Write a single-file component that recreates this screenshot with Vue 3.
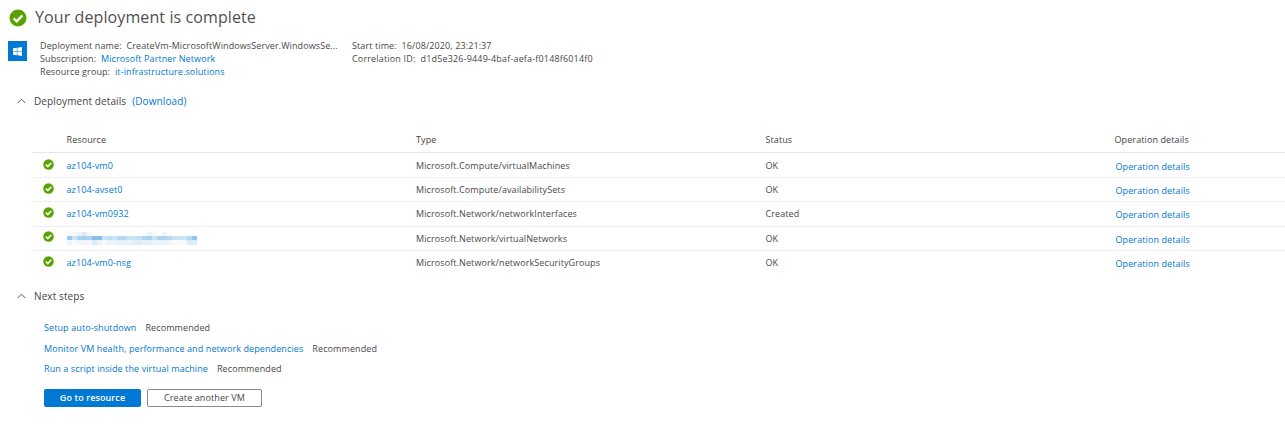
<script setup>
const rows = [
  { name: 'az104-vm0', type: 'Microsoft.Compute/virtualMachines', status: 'OK' },
  { name: 'az104-avset0', type: 'Microsoft.Compute/availabilitySets', status: 'OK' },
  { name: 'az104-vm0932', type: 'Microsoft.Network/networkInterfaces', status: 'Created' },
  { name: '', type: 'Microsoft.Network/virtualNetworks', status: 'OK' },
  { name: 'az104-vm0-nsg', type: 'Microsoft.Network/networkSecurityGroups', status: 'OK' },
]
const steps = [
  'Setup auto-shutdown',
  'Monitor VM health, performance and network dependencies',
  'Run a script inside the virtual machine',
]
const blurRows = [
  [.05,.08,.12,.2,.05,0,0,0,0,0,0,0,0,0,0,0,.12,.05,0,.1,.02,0,0,0,0,0],
  [.55,.3,.45,.5,.45,.65,.65,.3,.35,.3,.4,.4,.3,.3,.35,.45,.45,.3,.45,.45,.4,.3,.3,.3,.4,.6],
  [.1,.03,.08,.08,.08,.2,.12,.03,.1,.12,.15,.15,.12,.18,.18,.15,.15,.1,.12,.12,.1,.05,.05,.05,.2,.2],
]
</script>

<template>
  <main class="page">
    <header class="title">
      <svg class="title-icon" viewBox="0 0 18 18"><circle cx="9" cy="9" r="8.5" fill="#57a300"/><path d="M4.6 9.3 7.7 12.3 13.4 6.3" fill="none" stroke="#fff" stroke-width="2.4"/></svg>
      <h1>Your deployment is complete</h1>
    </header>

    <section class="summary">
      <div class="tile">
        <svg viewBox="0 0 10 10" width="9" height="9"><path d="M0 1.4 4.3.8v3.9H0zM4.9.7 10 0v4.7H4.9zM0 5.3h4.3v3.9L0 8.6zM4.9 5.3H10V10L4.9 9.3z" fill="#fff"/></svg>
      </div>
      <div class="meta first">
        <div>Deployment name:&nbsp; CreateVm-MicrosoftWindowsServer.WindowsSe...</div>
        <div>Subscription:&nbsp; <a>Microsoft Partner Network</a></div>
        <div>Resource group:&nbsp; <a>it-infrastructure.solutions</a></div>
      </div>
      <div class="meta">
        <div>Start time:&nbsp; 16/08/2020, 23:21:37</div>
        <div class="corr">Correlation ID:&nbsp; d1d5e326-9449-4baf-aefa-f0148f6014f0</div>
      </div>
    </section>

    <section class="section-head details-head">
      <svg class="chev" viewBox="0 0 10 6"><path d="M.7 5.3 5 1l4.3 4.3" fill="none" stroke="#444" stroke-width="1"/></svg>
      <span>Deployment details</span>
      <a class="download">(Download)</a>
    </section>

    <div class="table">
      <div class="row head">
        <span></span><span>Resource</span><span>Type</span><span>Status</span><span>Operation details</span>
      </div>
      <div v-for="r in rows" :key="r.type" class="row">
        <svg class="ok" viewBox="0 0 12 12"><circle cx="6" cy="6" r="5.7" fill="#57a300"/><path d="M3.1 6.2 5.2 8.2 9 4.1" fill="none" stroke="#fff" stroke-width="1.7"/></svg>
        <a v-if="r.name" class="res">{{ r.name }}</a>
        <span v-else class="blur">
          <span v-for="(line, n) in blurRows" :key="n" class="blur-line"><i v-for="(o, i) in line" :key="i" :style="{ opacity: o }"></i></span>
        </span>
        <span>{{ r.type }}</span>
        <span>{{ r.status }}</span>
        <a class="op">Operation details</a>
      </div>
    </div>

    <section class="section-head next-head">
      <svg class="chev" viewBox="0 0 10 6"><path d="M.7 5.3 5 1l4.3 4.3" fill="none" stroke="#444" stroke-width="1"/></svg>
      <span>Next steps</span>
    </section>

    <section class="steps">
      <div v-for="s in steps" :key="s" class="step"><a>{{ s }}</a><span>Recommended</span></div>
    </section>

    <div class="actions">
      <button class="primary">Go to resource</button>
      <button class="secondary">Create another VM</button>
    </div>
  </main>
</template>

<style>
html, body { margin: 0; background: #fff; overflow: hidden; }
</style>

<style scoped>
.page {
  width: 1285px;
  height: 445px;
  font-family: "Open Sans", "Noto Sans", sans-serif;
  font-size: 9px;
  letter-spacing: .1px;
  color: #484848;
  overflow: hidden;
}
a { color: #0078d4; }
.title { display: flex; align-items: center; gap: 8px; padding: 8px 0 0 9px; height: 20px; }
.title-icon { width: 18px; height: 18px; }
h1 { margin: 0 0 2px; font-size: 16px; font-weight: 400; color: #505050; line-height: 20px; }
.summary { display: flex; padding: 11px 0 0 8px; }
.tile {
  width: 19px; height: 20px; margin-top: 2px; background: #0078d4;
  display: flex; align-items: center; justify-content: center;
}
.meta { line-height: 13px; }
.meta.first { margin-left: 13px; width: 312px; }
.corr { letter-spacing: .17px; }
.section-head { display: flex; align-items: center; font-size: 10px; color: #444; height: 14px; padding-left: 17px; }
.chev { width: 9px; height: 6px; margin-right: 8px; }
.download { margin-left: 6px; }
.details-head { margin-top: 16px; }
.table { margin: 19px 0 0 32px; }
.row {
  display: grid;
  grid-template-columns: 34.5px 349.5px 349.5px 349px 1fr;
  height: 24.2px;
  box-sizing: border-box;
  align-items: center;
  border-bottom: 1px solid #f0f0f0;
}
.row:last-child { border-bottom: 0; }
.row.head { height: 26px; margin-bottom: 1px; border-bottom: 1px solid #e6e6e6; color: #444; }
.ok { width: 11px; height: 11px; margin: -3px 0 0 11px; }
.op { margin-top: 2px; margin-left: 1px; }
.blur { display: block; width: 130px; }
.blur-line { display: flex; height: 4.4px; }
.blur-line i { flex: 1; background: #4a9ee0; }
.next-head { margin-top: 14px; }
.steps { margin: 18px 0 0 44px; display: flex; flex-direction: column; gap: 7.7px; }
.step { display: flex; gap: 9px; line-height: 13px; }
.actions { display: flex; gap: 6px; margin: 13.6px 0 0 44px; }
button { height: 18px; width: 97px; padding: 0; border-radius: 2px; font: inherit; letter-spacing: inherit; box-sizing: border-box; }
.primary { background: #0078d4; color: #fff; border: 0; font-weight: 600; }
.secondary { width: 115px; background: #fff; color: #444; border: 1px solid #8a8a8a; }
</style>
